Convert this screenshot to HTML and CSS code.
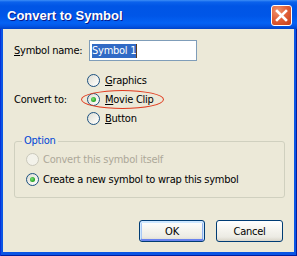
FILE: index.html
```html
<!DOCTYPE html>
<html>
<head>
<meta charset="utf-8">
<link rel="stylesheet" href="styles.css">
</head>
<body>
<div class="window">
  <div class="titlebar">
    <span class="title">Convert to Symbol</span>
    <span class="close"><svg width="19" height="19" viewBox="0 0 19 19"><path d="M5 5 L14 14 M14 5 L5 14" stroke="#fff" stroke-width="2.6" stroke-linecap="square"/></svg></span>
  </div>
  <div class="client">
    <div class="name-row">
      <span class="label"><u>S</u>ymbol name:</span>
      <div class="input"><span class="sel">Symbol 1</span><span class="caret"></span></div>
    </div>
    <div class="convert">
      <span class="label convert-label">Convert to:</span>
      <div class="radios">
        <div class="radio-row"><span class="radio"></span><span><u>G</u>raphics</span></div>
        <div class="radio-row"><span class="radio on"></span><span><u>M</u>ovie Clip</span><span class="ellipse"></span></div>
        <div class="radio-row"><span class="radio"></span><span><u>B</u>utton</span></div>
      </div>
    </div>
    <div class="group">
      <span class="legend">Option</span>
      <div class="radio-row wide disabled"><span class="radio"></span><span>Convert this symbol itself</span></div>
      <div class="radio-row wide"><span class="radio on"></span><span>Create a new symbol to wrap this symbol</span></div>
    </div>
    <div class="buttons">
      <button class="btn ok">OK</button>
      <button class="btn cancel">Cancel</button>
    </div>
  </div>
</div>
</body>
</html>
```

FILE: styles.css
```css
body {
  margin: 0;
  font-family: "DejaVu Sans Condensed", "DejaVu Sans", sans-serif;
  font-stretch: condensed;
  font-size: 11px;
  letter-spacing: -0.25px;
  color: #000;
}
.window {
  width: 297px;
  height: 256px;
  display: flex;
  flex-direction: column;
  background: #0a55e4;
  box-shadow: inset 1px 0 #0831d9, inset -1px 0 #001ea0, inset 0 -1px #001ea0;
}
.titlebar {
  height: 29px;
  flex: none;
  display: flex;
  justify-content: space-between;
  align-items: center;
  padding: 0 5px 0 7px;
  background: linear-gradient(#3d8ef6 0, #0b62ec 2px, #0055e5 6px, #0056e8 16px, #0462f4 23px, #0356e6 26px, #0043c9 29px);
}
.title {
  color: #fff;
  font-family: "Liberation Sans", Arial, sans-serif;
  font-stretch: normal;
  letter-spacing: 0;
  font-weight: bold;
  font-size: 13px;
  text-shadow: 1px 1px #0a1a8a;
  margin-top: 1px;
}
.close {
  align-self: flex-start;
  margin-top: 5px;
  width: 21px;
  height: 21px;
  box-sizing: border-box;
  border: 1px solid #fff;
  border-radius: 3px;
  background: radial-gradient(circle at 30% 25%, #f0946e 0, #e2623a 45%, #c53c17 100%);
  display: flex;
  align-items: center;
  justify-content: center;
}
.close svg { display: block; }
.client {
  flex: 1;
  margin: 0 3px 4px;
  background: #ece9d8;
  padding: 11px 0 0 11px;
}
.name-row {
  display: flex;
  align-items: center;
  height: 21px;
}
.label {
  width: 75px;
  flex: none;
}
.input {
  width: 108px;
  height: 21px;
  box-sizing: border-box;
  border: 1px solid #7f9db9;
  background: #fff;
  display: flex;
  align-items: center;
  padding-left: 2px;
}
.sel {
  background: #316ac5;
  color: #fff;
  line-height: 14px;
  height: 14px;
}
.caret {
  width: 1px;
  height: 14px;
  background: #5a3a20;
}
.convert {
  display: grid;
  grid-template-columns: 73px auto;
  margin-top: 10px;
}
.convert-label {
  width: auto;
  padding-top: 19px;
  line-height: 19px;
}
.radio-row {
  position: relative;
  display: flex;
  align-items: center;
  gap: 5px;
  height: 19px;
}
.radio-row.wide { height: 20px; gap: 4px; }
.radio {
  width: 13px;
  height: 13px;
  box-sizing: border-box;
  border: 1px solid #1c5180;
  border-radius: 50%;
  background: linear-gradient(135deg, #dcdcd3 0, #f4f3ee 60%, #fff 100%);
  flex: none;
  display: flex;
  align-items: center;
  justify-content: center;
}
.radio.on::after {
  content: "";
  width: 5px;
  height: 5px;
  border-radius: 50%;
  background: radial-gradient(circle at 40% 40%, #7fe07b 0, #2aa82a 60%, #1a8f1a 100%);
}
.disabled { color: #aca899; }
.disabled .radio {
  border-color: #cac8bb;
  background: #f3f2ea;
}
.ellipse {
  position: absolute;
  left: -6px;
  top: 0;
  width: 83px;
  height: 19px;
  box-sizing: border-box;
  border: 1px solid #e03a1e;
  border-radius: 50%;
}
.group {
  position: relative;
  width: 271px;
  box-sizing: border-box;
  margin-top: 13px;
  border: 1px solid #d0d0bf;
  border-radius: 3px;
  padding: 7px 0 8px 11px;
}
.legend {
  position: absolute;
  left: 7px;
  top: -8px;
  padding: 0 2px;
  background: #ece9d8;
  color: #0046d5;
  line-height: 14px;
}
.buttons {
  display: flex;
  justify-content: flex-end;
  gap: 11px;
  width: 269px;
  margin-top: 22px;
}
.btn {
  height: 22px;
  box-sizing: border-box;
  border: 1px solid #003c74;
  border-radius: 3px;
  background: linear-gradient(#ffffff 0, #f6f5f0 40%, #ecebe4 80%, #d8d4c8 100%);
  font-family: "DejaVu Sans Condensed", "DejaVu Sans", sans-serif;
  font-stretch: condensed;
  letter-spacing: -0.25px;
  font-size: 11px;
  color: #000;
  padding: 0;
}
.ok {
  width: 66px;
  box-shadow: inset 0 1px 0 1px #cee7ff, inset 0 -1px 0 1px #6982ee, inset 1px 0 0 1px #a8c8f5, inset -1px 0 0 1px #8fb0ec;
}
.cancel { width: 67px; }
```
